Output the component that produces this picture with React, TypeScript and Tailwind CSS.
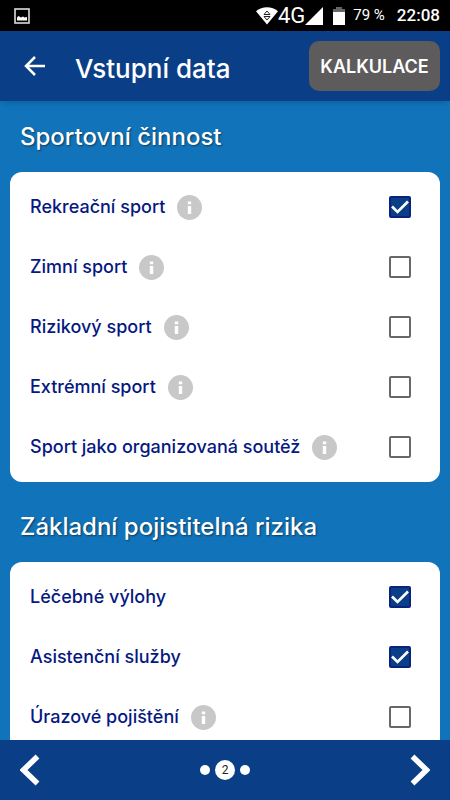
import React, { useState } from "react";

type Risk = { id: string; label: string; info?: boolean; checked?: boolean };

const sports: Risk[] = [
  { id: "recreational", label: "Rekreační sport", info: true, checked: true },
  { id: "winter", label: "Zimní sport", info: true },
  { id: "risky", label: "Rizikový sport", info: true },
  { id: "extreme", label: "Extrémní sport", info: true },
  { id: "organized", label: "Sport jako organizovaná soutěž", info: true },
];

const risks: Risk[] = [
  { id: "medical", label: "Léčebné výlohy", checked: true },
  { id: "assistance", label: "Asistenční služby", checked: true },
  { id: "accident", label: "Úrazové pojištění", info: true },
];

function StatusBar() {
  return (
    <div className="flex h-[31px] shrink-0 items-center bg-black pr-2.5 pl-3.5 font-[Roboto,sans-serif] text-white">
      <svg className="h-4 w-4" viewBox="0 0 16 16" fill="none" aria-hidden="true">
        <rect x="1" y="1" width="14" height="14" stroke="#ddd" strokeWidth="1.6" />
        <path d="M3 12.5V9.500l1.500-1.500 2.500 1.500 2-1 1.500 1 2.500-.5v3.500z" fill="#fff" />
      </svg>
      <div className="ml-auto flex items-center">
        <svg className="h-[18px] w-[22px]" viewBox="0 0 22 18" aria-hidden="true">
          <path d="M0 4.2C6-1.2 16-1.2 22 4.2L11 17.5z" fill="#fff" />
          <path d="M11 4l3 3.500H8zM8 9.500h6l-3 3.500z" fill="#fff" stroke="#222" strokeWidth="1" />
        </svg>
        <span className="text-[22px] leading-6">4G</span>
        <svg className="h-[18px] w-[18px]" viewBox="0 0 18 18" aria-hidden="true">
          <path d="M18 0v18H0z" fill="#fff" />
        </svg>
        <svg className="ml-2.5 h-[18px] w-3" viewBox="0 0 12 18" aria-hidden="true">
          <path d="M3 0h6v2h3v3H0V2h3z" fill="#666" />
          <path d="M0 5h12v13H0z" fill="#fff" />
        </svg>
        <span className="ml-2 text-[15px]">79 %</span>
        <span className="ml-3 text-[17px] font-medium">22:08</span>
      </div>
    </div>
  );
}

function Row({ item }: { item: Risk }) {
  const [checked, setChecked] = useState(!!item.checked);
  return (
    <li className="flex h-[60px] items-center pr-[29px] pl-5">
      <label htmlFor={item.id} className="text-[18px] leading-6 font-medium text-[#06197f]">
        {item.label}
      </label>
      {item.info && (
        <button type="button" aria-label={`Informace: ${item.label}`} className="ml-3 shrink-0">
          <svg className="block h-[25px] w-[25px]" viewBox="0 0 25 25" aria-hidden="true">
            <circle cx="12.500" cy="12.500" r="12.500" fill="#c8c8c8" />
            <path d="M10.800 6.500h3.400v2.700h-3.400zM10.800 11h3.400v8h-3.400z" fill="#fff" />
          </svg>
        </button>
      )}
      <span className="ml-auto grid h-[22px] w-[22px] shrink-0">
        <input
          id={item.id}
          type="checkbox"
          checked={checked}
          onChange={(e) => setChecked(e.target.checked)}
          className="col-start-1 row-start-1 h-[22px] w-[22px] appearance-none rounded-xs border-2 border-[#686868] bg-white checked:border-[#0a237f] checked:bg-[#0a3f87]"
        />
        {checked && (
          <svg className="pointer-events-none col-start-1 row-start-1 h-[22px] w-[22px]" viewBox="0 0 22 22" fill="none" aria-hidden="true">
            <path d="M3 10.500l5.500 5.500L19 5.500" stroke="#fff" strokeWidth="2.600" />
          </svg>
        )}
      </span>
    </li>
  );
}

function Section({ title, items }: { title: string; items: Risk[] }) {
  return (
    <section className="mb-2.5">
      <h2 className="flex h-[70px] items-center px-5 text-2xl font-medium text-white [text-shadow:1px_1px_2px_#00000080]">
        {title}
      </h2>
      <ul className="mx-2.5 rounded-xl bg-white py-[5px]">
        {items.map((item) => (
          <Row key={item.id} item={item} />
        ))}
      </ul>
    </section>
  );
}

export default function App() {
  return (
    <div className="flex h-screen flex-col bg-[#1174bb] font-[Inter,sans-serif]">
      <StatusBar />
      <header className="z-10 flex h-[70px] shrink-0 items-center bg-[#0a3f87] pr-2.5 pl-[23px] text-white shadow-md">
        <button type="button" aria-label="Zpět">
          <svg className="block h-6 w-6" viewBox="0 0 24 24" fill="none" aria-hidden="true">
            <path d="M22 12H4M12 3l-9 9 9 9" stroke="#fff" strokeWidth="2.500" />
          </svg>
        </button>
        <h1 className="ml-7 pt-1 text-[26px] font-medium">Vstupní data</h1>
        <button type="button" className="ml-auto h-[50px] w-[131px] rounded-[10px] bg-[#5d5b5c] text-[18px] font-semibold">
          KALKULACE
        </button>
      </header>
      <main className="min-h-0 flex-1 overflow-y-auto pt-px [scrollbar-width:none]">
        <Section title="Sportovní činnost" items={sports} />
        <Section title="Základní pojistitelná rizika" items={risks} />
      </main>
      <nav aria-label="Kroky" className="flex h-[60px] shrink-0 items-center justify-between bg-[#0a3f87] px-5">
        <button type="button" aria-label="Předchozí">
          <svg className="block h-8 w-5" viewBox="0 0 20 32" fill="none" aria-hidden="true">
            <path d="M17.500 2.500L3.500 16l14 13.500" stroke="#fff" strokeWidth="5.500" />
          </svg>
        </button>
        <div className="flex items-center gap-[5px]">
          <span className="h-2.5 w-2.5 rounded-full bg-white" />
          <span className="flex h-5 w-5 items-center justify-center rounded-full bg-white font-[Roboto,sans-serif] text-xs text-[#222]">
            2
          </span>
          <span className="h-2.5 w-2.5 rounded-full bg-white" />
        </div>
        <button type="button" aria-label="Další">
          <svg className="block h-8 w-5" viewBox="0 0 20 32" fill="none" aria-hidden="true">
            <path d="M2.500 2.500L16.500 16l-14 13.500" stroke="#fff" strokeWidth="5.500" />
          </svg>
        </button>
      </nav>
    </div>
  );
}
